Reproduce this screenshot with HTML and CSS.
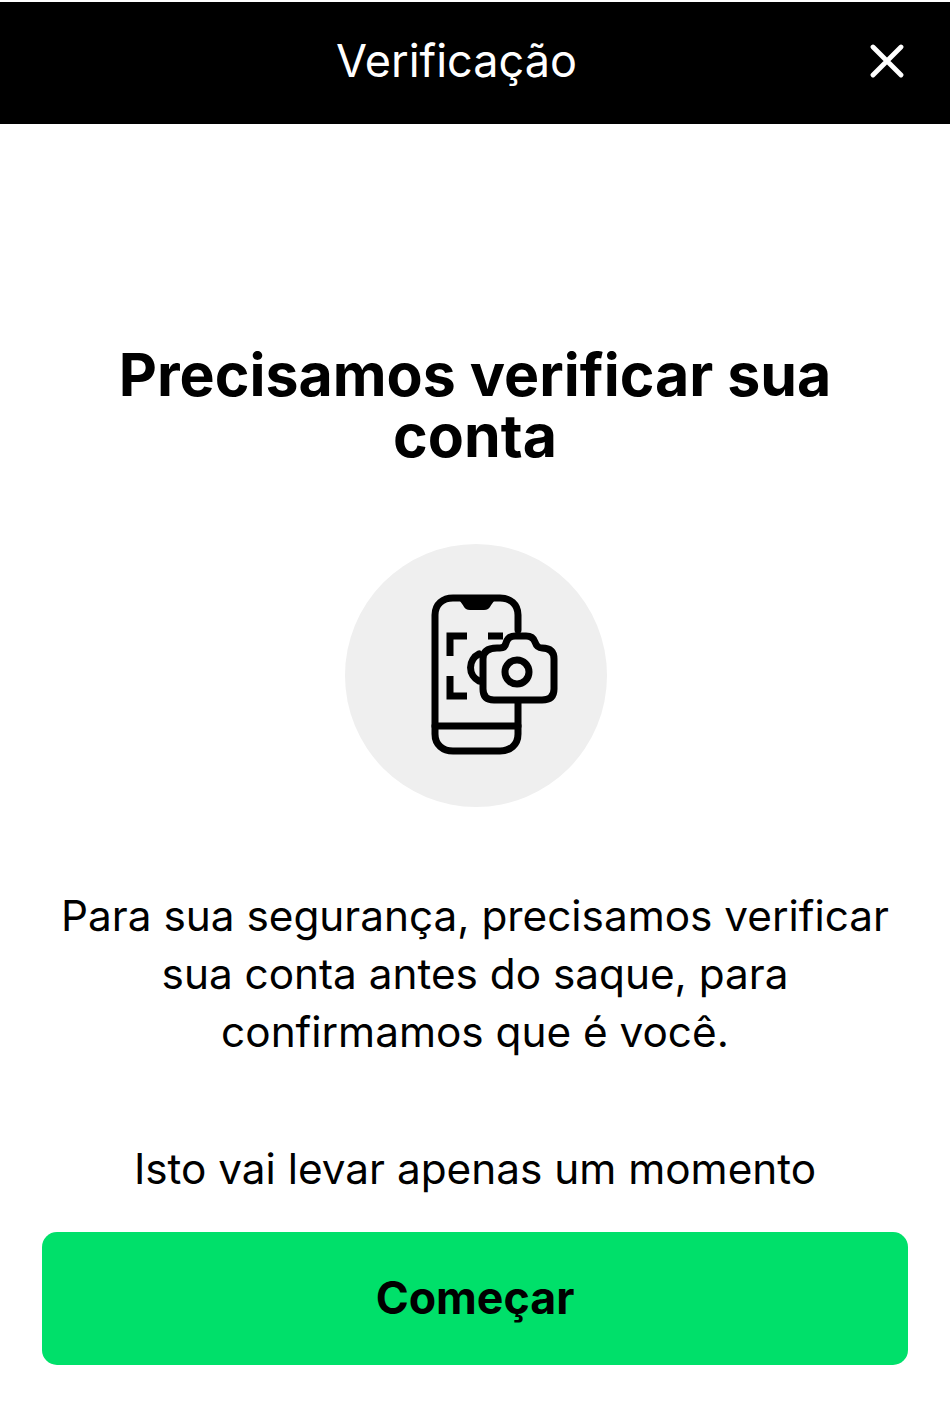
FILE: index.html
```html
<!DOCTYPE html>
<html lang="pt-BR">
<head>
  <meta charset="UTF-8">
  <title>Verificação</title>
  <meta name="viewport" content="width=device-width, initial-scale=1">
  <link rel="stylesheet" href="styles.css">
</head>
<body>
  <header class="topbar">
    <span class="topbar-title">Verificação</span>
    <button class="close-btn" aria-label="Fechar">
      <svg viewBox="0 0 34 34" width="34" height="34" fill="none" stroke="#fff" stroke-width="4.8" stroke-linecap="round">
        <path d="M3 3L31 31M31 3L3 31"/>
      </svg>
    </button>
  </header>

  <main class="content">
    <h1 class="heading">Precisamos verificar sua conta</h1>

    <div class="icon-circle">
      <svg viewBox="0 0 262 262" width="262" height="262" fill="none" stroke="#000" stroke-width="7" stroke-linecap="round" stroke-linejoin="round">
        <!-- phone -->
        <path d="M173 86V71C173 60 165 54 155 54H108C98 54 90 60 90 71V190C90 201 98 207 108 207H155C165 207 173 201 173 190V159"/>
        <path d="M114 54H150L145 61Q143 65 139 65H125Q121 65 119 61Z" fill="#000" stroke-width="2"/>
        <path d="M90 182H173"/>
        <!-- scan brackets -->
        <path d="M122 92H105V112M105 132V152H122M143 92H158" stroke-linecap="butt" stroke-linejoin="miter"/>
        <path d="M134 110A15 15 0 0 0 134 137"/>
        <!-- camera -->
        <path d="M152 104H155Q160 104 161 99Q163 92 170 92H181Q188 92 190 98Q192 104 197 104Q209 104 209 115V145Q209 156 197 156H149Q138 156 138 145V115Q138 104 152 104Z" fill="#efefef"/>
        <circle cx="172" cy="128" r="12"/>
      </svg>
    </div>

    <p class="body-text">Para sua segurança, precisamos verificar sua conta antes do saque, para confirmamos que é você.</p>
    <p class="body-text note">Isto vai levar apenas um momento</p>

    <button class="primary-btn">Começar</button>
  </main>
</body>
</html>
```

FILE: styles.css
```css
* { box-sizing: border-box; }

body {
  margin: 0;
  height: 1427px;
  padding-top: 2px;
  background: #fff;
  color: #000;
  font-family: "Inter", "Liberation Sans", sans-serif;
  overflow: hidden;
}

.topbar {
  height: 122px;
  background: #000;
  color: #fff;
  display: flex;
  align-items: center;
  justify-content: space-between;
  padding: 0 46px 4px 336px;
}
.topbar-title { font-size: 45px; font-weight: 400; margin-bottom: 2px; }
.close-btn { display: flex; padding: 0; border: none; background: none; }

.content {
  display: flex;
  flex-direction: column;
  align-items: center;
  padding: 220px 42px 0;
}

.heading {
  margin: 0;
  width: 760px;
  font-size: 59px;
  font-weight: 700;
  line-height: 61px;
  text-align: center;
}

.icon-circle {
  width: 262px;
  height: 263px;
  margin: 78px 0 80px 2px;
  border-radius: 50%;
  background: #efefef;
}
.icon-circle svg { display: block; }

.body-text {
  margin: 0;
  width: 860px;
  font-size: 42.3px;
  line-height: 58px;
  text-align: center;
}
.note { margin-top: 79px; }

.primary-btn {
  width: 866px;
  height: 133px;
  margin-top: 34px;
  padding: 0 0 2px;
  border: none;
  border-radius: 15px;
  background: #00e06a;
  color: #000;
  font-family: inherit;
  font-size: 44.7px;
  font-weight: 700;
}
```
